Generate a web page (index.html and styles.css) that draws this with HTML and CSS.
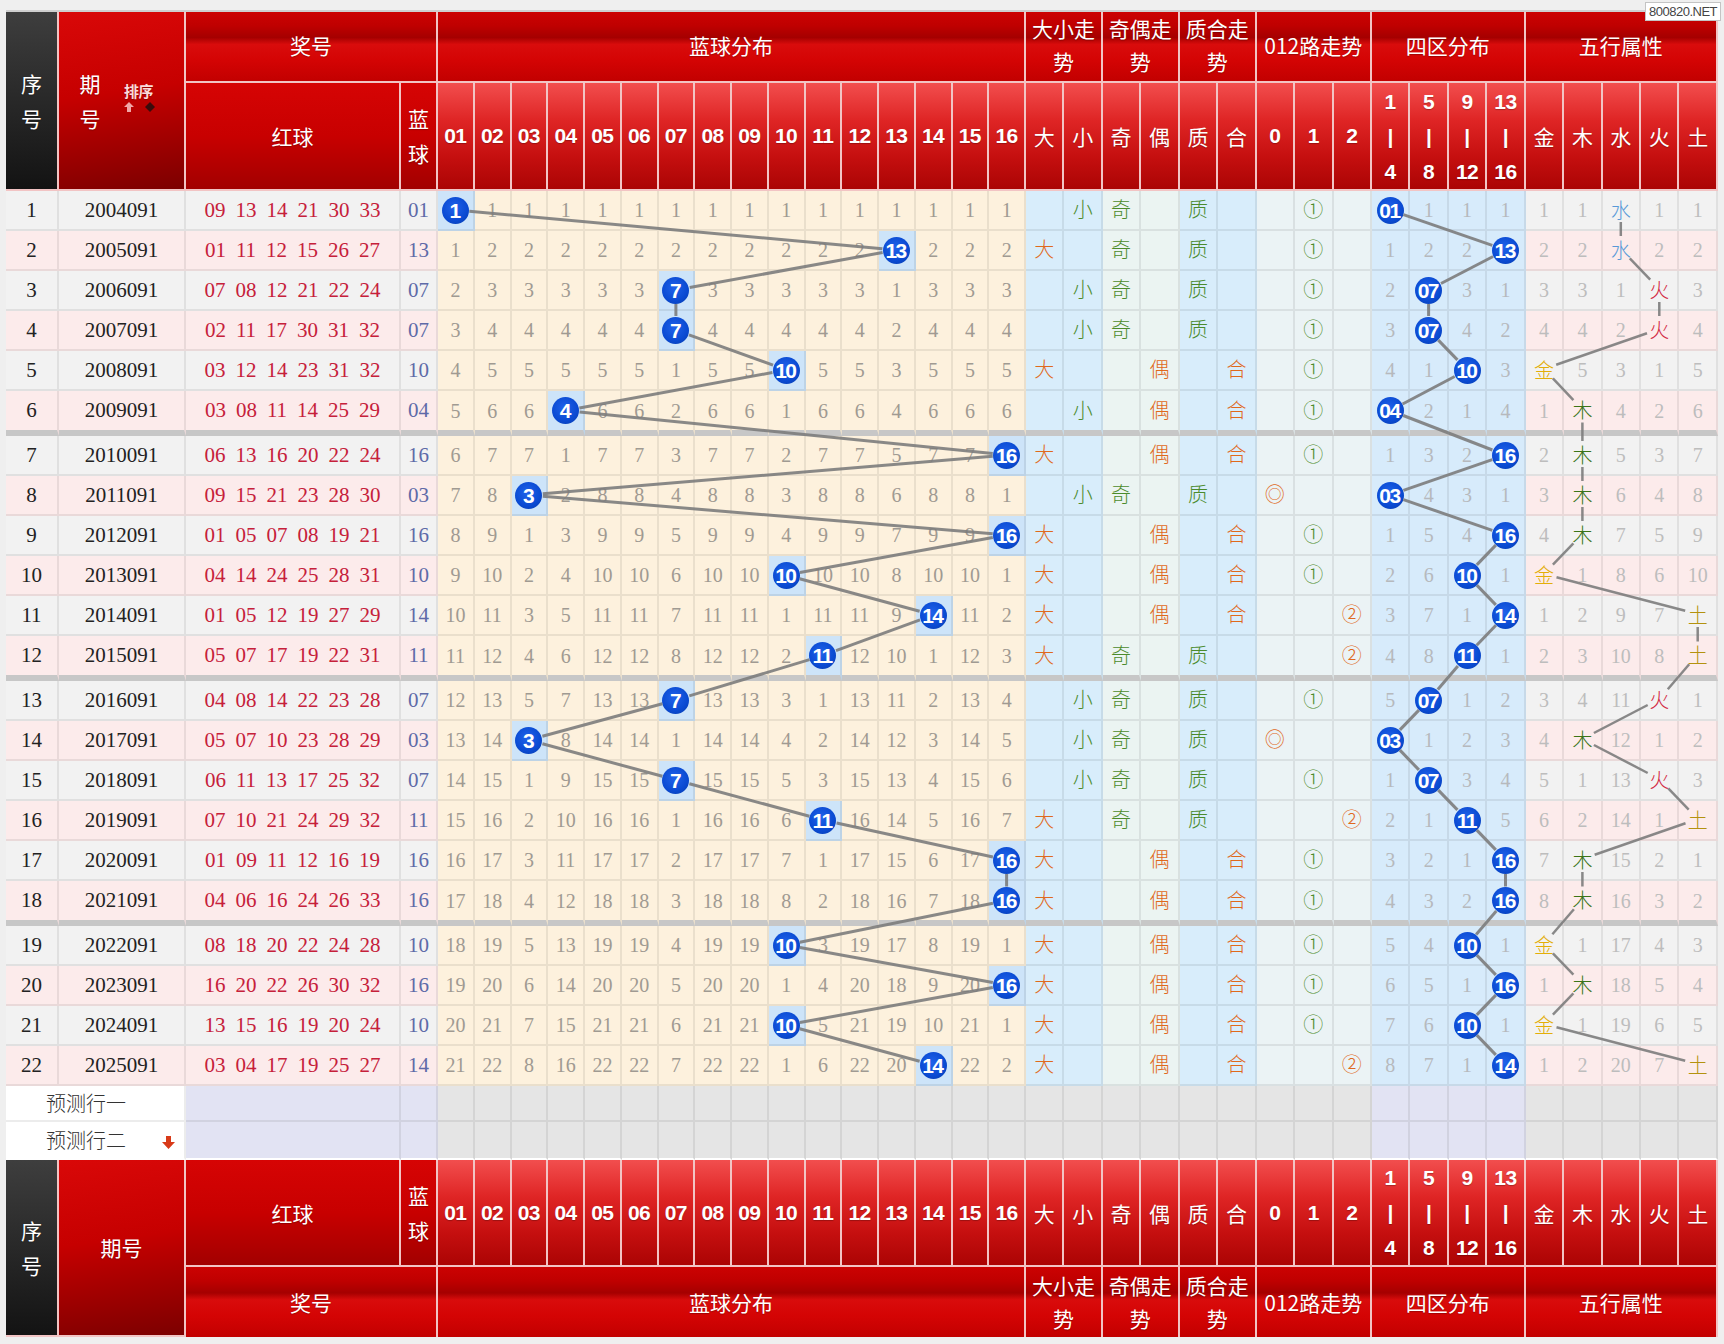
FILE: index.html
```html
<!DOCTYPE html>
<html lang="zh-CN">
<head>
<meta charset="utf-8">
<title>双色球蓝球走势图</title>
<link rel="stylesheet" href="styles.css">
</head>
<body>
<div class="chart">
<table class="trend">
<colgroup>
<col class="w-xh"><col class="w-qh"><col class="w-red"><col class="w-blue">
<col class="w-d"><col class="w-d"><col class="w-d"><col class="w-d"><col class="w-d"><col class="w-d"><col class="w-d"><col class="w-d">
<col class="w-d"><col class="w-d"><col class="w-d"><col class="w-d"><col class="w-d"><col class="w-d"><col class="w-d"><col class="w-d">
<col class="w-t"><col class="w-t"><col class="w-t"><col class="w-t"><col class="w-t"><col class="w-t"><col class="w-t"><col class="w-t"><col class="w-t">
<col class="w-t"><col class="w-t"><col class="w-t"><col class="w-t"><col class="w-t"><col class="w-t"><col class="w-t"><col class="w-t"><col class="w-t">
</colgroup>
<thead>
<tr class="g1">
<th rowspan="2" class="xh">序<br>号</th>
<th rowspan="2" class="qh"><div class="qh-in"><span class="qh-t">期<br>号</span><span class="sort"><b>排序</b><svg width="31" height="10" viewBox="0 0 31 10"><polygon points="5,0 10,5 7,5 7,10 3,10 3,5 0,5" fill="#f0a6a6"/><polygon points="26,0 31,5 26,10 21,5" fill="#3a0b0b"/></svg></span></div></th>
<th colspan="2" class="band">奖号</th>
<th colspan="16" class="band">蓝球分布</th>
<th colspan="2" class="band wrap">大小走势</th>
<th colspan="2" class="band wrap">奇偶走势</th>
<th colspan="2" class="band wrap">质合走势</th>
<th colspan="3" class="band">012路走势</th>
<th colspan="4" class="band">四区分布</th>
<th colspan="5" class="band">五行属性</th>
</tr>
<tr class="g2">
<th class="big">红球</th>
<th class="big tall">蓝<br>球</th>
<th class="num">01</th><th class="num">02</th><th class="num">03</th><th class="num">04</th><th class="num">05</th><th class="num">06</th><th class="num">07</th><th class="num">08</th>
<th class="num">09</th><th class="num">10</th><th class="num">11</th><th class="num">12</th><th class="num">13</th><th class="num">14</th><th class="num">15</th><th class="num">16</th>
<th class="cell">大</th><th class="cell">小</th><th class="cell">奇</th><th class="cell">偶</th><th class="cell">质</th><th class="cell">合</th>
<th class="num">0</th><th class="num">1</th><th class="num">2</th>
<th class="num st">1<br>|<br>4</th><th class="num st">5<br>|<br>8</th><th class="num st">9<br>|<br>12</th><th class="num st">13<br>|<br>16</th>
<th class="cell">金</th><th class="cell">木</th><th class="cell">水</th><th class="cell">火</th><th class="cell">土</th>
</tr>
</thead>
<tbody id="tb">
<tr class="p" id="pred1">
<td colspan="2" class="pl">预测行一</td>
<td class="lav"></td><td class="lav"></td>
<td class="gr"></td><td class="gr"></td><td class="gr"></td><td class="gr"></td><td class="gr"></td><td class="gr"></td><td class="gr"></td><td class="gr"></td>
<td class="gr"></td><td class="gr"></td><td class="gr"></td><td class="gr"></td><td class="gr"></td><td class="gr"></td><td class="gr"></td><td class="gr"></td>
<td class="gr"></td><td class="gr"></td><td class="gr"></td><td class="gr"></td><td class="gr"></td><td class="gr"></td><td class="gr"></td><td class="gr"></td><td class="gr"></td>
<td class="lav"></td><td class="lav"></td><td class="lav"></td><td class="lav"></td>
<td class="gr"></td><td class="gr"></td><td class="gr"></td><td class="gr"></td><td class="gr"></td>
</tr>
<tr class="p p2">
<td colspan="2" class="pl">预测行二<svg class="down" width="13" height="13" viewBox="0 0 13 13"><polygon points="4,0 9,0 9,6 13,6 6.5,13 0,6 4,6" fill="#d83a18"/></svg></td>
<td class="lav"></td><td class="lav"></td>
<td class="gr"></td><td class="gr"></td><td class="gr"></td><td class="gr"></td><td class="gr"></td><td class="gr"></td><td class="gr"></td><td class="gr"></td>
<td class="gr"></td><td class="gr"></td><td class="gr"></td><td class="gr"></td><td class="gr"></td><td class="gr"></td><td class="gr"></td><td class="gr"></td>
<td class="gr"></td><td class="gr"></td><td class="gr"></td><td class="gr"></td><td class="gr"></td><td class="gr"></td><td class="gr"></td><td class="gr"></td><td class="gr"></td>
<td class="lav"></td><td class="lav"></td><td class="lav"></td><td class="lav"></td>
<td class="gr"></td><td class="gr"></td><td class="gr"></td><td class="gr"></td><td class="gr"></td>
</tr>
</tbody>
<tfoot>
<tr class="f1">
<th rowspan="2" class="xh">序<br>号</th>
<th rowspan="2" class="qh">期号</th>
<th class="big">红球</th>
<th class="big tall">蓝<br>球</th>
<th class="num">01</th><th class="num">02</th><th class="num">03</th><th class="num">04</th><th class="num">05</th><th class="num">06</th><th class="num">07</th><th class="num">08</th>
<th class="num">09</th><th class="num">10</th><th class="num">11</th><th class="num">12</th><th class="num">13</th><th class="num">14</th><th class="num">15</th><th class="num">16</th>
<th class="cell">大</th><th class="cell">小</th><th class="cell">奇</th><th class="cell">偶</th><th class="cell">质</th><th class="cell">合</th>
<th class="num">0</th><th class="num">1</th><th class="num">2</th>
<th class="num st">1<br>|<br>4</th><th class="num st">5<br>|<br>8</th><th class="num st">9<br>|<br>12</th><th class="num st">13<br>|<br>16</th>
<th class="cell">金</th><th class="cell">木</th><th class="cell">水</th><th class="cell">火</th><th class="cell">土</th>
</tr>
<tr class="f2">
<th colspan="2" class="band">奖号</th>
<th colspan="16" class="band">蓝球分布</th>
<th colspan="2" class="band wrap">大小走势</th>
<th colspan="2" class="band wrap">奇偶走势</th>
<th colspan="2" class="band wrap">质合走势</th>
<th colspan="3" class="band">012路走势</th>
<th colspan="4" class="band">四区分布</th>
<th colspan="5" class="band">五行属性</th>
</tr>
</tfoot>
</table>
<svg class="lines" id="lines"></svg>
<div class="mark">800820.NET</div>
</div>
<script src="script.js"></script>
</body>
</html>
```

FILE: styles.css
```css
* { box-sizing: border-box; }
html, body { margin: 0; }
body {
  background: #efefef;
  padding: 10px 6px 0;
  font-family: "Liberation Serif", "Noto Sans CJK SC", serif;
}
.chart { position: relative; width: 1712px; }
.trend {
  width: 1712px;
  table-layout: fixed;
  border-collapse: separate;
  border-spacing: 0;
  border-top: 2px solid #cfcfcf;
}
.w-xh { width: 53px; }
.w-qh { width: 127px; }
.w-red { width: 215px; }
.w-blue { width: 37px; }
.w-d { width: 36.75px; }
.w-t { width: 38.44px; }

/* header */
th {
  padding: 0;
  color: #fff;
  font-family: "Noto Sans CJK SC", sans-serif;
  font-weight: 400;
  font-size: 21px;
  text-align: center;
  vertical-align: middle;
  border-right: 2px solid #f2c4c4;
  border-bottom: 2px solid #f2c4c4;
  text-shadow: 0 1px 1px rgba(0,0,0,.25);
}
.g1 { height: 71px; }
.g1 .band { padding-bottom: 3px; }
.f2 { height: 70px; }
.g2 { height: 108px; }
.f1 { height: 106px; }
.f2 th { border-bottom: none; }
.xh {
  background: linear-gradient(#3e3e3e, #131313);
  line-height: 35px;
}
.qh {
  background: linear-gradient(172deg, #d90808 0%, #c60000 45%, #7c0000 100%);
  line-height: 35px;
}
.qh-in { display: flex; align-items: center; padding-left: 20px; }
.qh-t { width: 22px; }
.sort {
  display: flex;
  flex-direction: column;
  align-items: flex-start;
  margin-left: 23px;
  margin-top: -6px;
  line-height: 16px;
}
.sort b {
  font-size: 15px;
  font-weight: 700;
  color: #fbdada;
  letter-spacing: -0.5px;
  margin-bottom: 3px;
}
.band {
  background: linear-gradient(to bottom, #cc0202 0%, #bf0000 20%, #a50000 37%, #d90c0c 47%, #d40404 70%, #c20000 100%);
}
.wrap { line-height: 33px; }
.big {
  background: linear-gradient(to bottom, #d60404 0%, #c80000 50%, #a20000 100%);
}
.tall { line-height: 35px; }
.num, .cell {
  background: linear-gradient(to bottom, #f24e4e 0%, #df2525 35%, #c50f0f 70%, #ab0404 100%);
}
.num {
  font-family: "Liberation Sans", sans-serif;
  font-weight: 700;
  font-size: 21px;
  letter-spacing: -0.5px;
}
.st { line-height: 35px; }

/* body */
td {
  padding: 0;
  text-align: center;
  vertical-align: middle;
  font-size: 21px;
  line-height: 1;
  border-right: 2px solid rgba(0,0,0,.075);
  border-bottom: 2px solid rgba(0,0,0,.075);
  white-space: nowrap;
}
.r { height: 40px; }
.r.sep { height: 45px; }
.r.sep td { border-bottom: 6px solid #c7c7c7; }
.r.odd .base, .r.odd .wx { background: #f2f2f2; }
.r.even .base, .r.even .wx { background: #fcebeb; }
.c-xh, .c-qh { color: #222; }
.c-red { color: #c6203a; }
.c-red span { margin: 0 5px; }
.c-blue { color: #5e6aa8; }
.d { background: #fdf1dd; color: #a09a92; font-size: 20px; }
.d.hit { background: #cde4f9; }
.dx, .zh { background: #d8edfb; }
.jo { background: #ebf4f2; }
.ll { background: #ebf3f5; }
.zn { background: #d7ebfb; color: #b6b9bd; font-size: 20px; }
.wx { color: #bdbdbd; font-size: 20px; }
.cj {
  font-family: "Noto Sans CJK SC", sans-serif;
  font-weight: 300;
  font-size: 20px;
}
.g { color: #4b8b2b; }
.o { color: #e0691c; }
.jin { color: #e3ae08; }
.mu { color: #3a7418; }
.shui { color: #5799d8; }
.huo { color: #d22a44; }
.tu { color: #b4920e; }
.ball {
  display: inline-block;
  width: 27px;
  height: 27px;
  border-radius: 50%;
  background: radial-gradient(circle at 45% 40%, #1f62ea 0%, #0a4ad2 60%, #073aa6 100%);
  color: #fff;
  font-family: "Liberation Sans", sans-serif;
  font-weight: 700;
  font-size: 21px;
  line-height: 27px;
  letter-spacing: -1.5px;
  text-indent: -1.5px;
  vertical-align: middle;
}

/* prediction rows */
.p { height: 36px; }
.p2 { height: 38px; }
.p2 td { border-bottom: 2px solid #fff; }
.pl {
  background: #fff;
  text-align: left;
  padding-left: 40px;
  color: #333;
  font-family: "Noto Sans CJK SC", sans-serif;
  font-weight: 300;
  font-size: 20px;
}
.down { margin-left: 36px; vertical-align: middle; }
.lav { background: #e2e3f3; }
.gr { background: #e5e5e5; }

/* overlays */
.lines {
  position: absolute;
  left: 0;
  top: 0;
  pointer-events: none;
}
.mark {
  position: absolute;
  top: -8px;
  right: -3px;
  height: 19px;
  padding: 0 3px;
  background: #fff;
  border: 1px solid #c4c4c4;
  color: #444;
  font-family: "Liberation Sans", sans-serif;
  font-size: 13px;
  letter-spacing: -0.5px;
  line-height: 17px;
}
```

FILE: script.js
```js
(function () {
  var data = [
    ["1", "2004091", "09 13 14 21 30 33", "01"],
    ["2", "2005091", "01 11 12 15 26 27", "13"],
    ["3", "2006091", "07 08 12 21 22 24", "07"],
    ["4", "2007091", "02 11 17 30 31 32", "07"],
    ["5", "2008091", "03 12 14 23 31 32", "10"],
    ["6", "2009091", "03 08 11 14 25 29", "04"],
    ["7", "2010091", "06 13 16 20 22 24", "16"],
    ["8", "2011091", "09 15 21 23 28 30", "03"],
    ["9", "2012091", "01 05 07 08 19 21", "16"],
    ["10", "2013091", "04 14 24 25 28 31", "10"],
    ["11", "2014091", "01 05 12 19 27 29", "14"],
    ["12", "2015091", "05 07 17 19 22 31", "11"],
    ["13", "2016091", "04 08 14 22 23 28", "07"],
    ["14", "2017091", "05 07 10 23 28 29", "03"],
    ["15", "2018091", "06 11 13 17 25 32", "07"],
    ["16", "2019091", "07 10 21 24 29 32", "11"],
    ["17", "2020091", "01 09 11 12 16 19", "16"],
    ["18", "2021091", "04 06 16 24 26 33", "16"],
    ["19", "2022091", "08 18 20 22 24 28", "10"],
    ["20", "2023091", "16 20 22 26 30 32", "16"],
    ["21", "2024091", "13 15 16 19 20 24", "10"],
    ["22", "2025091", "03 04 17 19 25 27", "14"]
  ];
  var WX = { 9: 0, 10: 0, 3: 1, 4: 1, 15: 1, 16: 1, 1: 2, 12: 2, 13: 2, 6: 3, 7: 3, 2: 4, 5: 4, 8: 4, 11: 4, 14: 4 };
  var WXN = ["金", "木", "水", "火", "土"];
  var WXC = ["jin", "mu", "shui", "huo", "tu"];
  var PRIME = [1, 2, 3, 5, 7, 11, 13];
  var miss = [], zmiss = [0, 0, 0, 0], wmiss = [0, 0, 0, 0, 0];
  for (var q = 0; q <= 16; q++) miss[q] = 0;

  var tb = document.getElementById("tb");
  var pred = document.getElementById("pred1");

  data.forEach(function (d, i) {
    var b = parseInt(d[3], 10);
    var tr = document.createElement("tr");
    tr.className = "r " + (i % 2 ? "even" : "odd") + ((i + 1) % 6 === 0 && i < 21 ? " sep" : "");
    var h = "";
    h += '<td class="base c-xh">' + d[0] + "</td>";
    h += '<td class="base c-qh">' + d[1] + "</td>";
    h += '<td class="base c-red">' + d[2].split(" ").map(function (n) { return "<span>" + n + "</span>"; }).join("") + "</td>";
    h += '<td class="base c-blue">' + d[3] + "</td>";
    for (var c = 1; c <= 16; c++) {
      if (c === b) {
        miss[c] = 0;
        h += '<td class="d hit"><span class="ball" data-chain="dist">' + b + "</span></td>";
      } else {
        miss[c]++;
        h += '<td class="d">' + miss[c] + "</td>";
      }
    }
    var big = b >= 9, odd = b % 2 === 1, pr = PRIME.indexOf(b) >= 0, m = b % 3;
    h += '<td class="dx">' + (big ? '<span class="cj o">大</span>' : "") + "</td>";
    h += '<td class="dx">' + (!big ? '<span class="cj g">小</span>' : "") + "</td>";
    h += '<td class="jo">' + (odd ? '<span class="cj g">奇</span>' : "") + "</td>";
    h += '<td class="jo">' + (!odd ? '<span class="cj o">偶</span>' : "") + "</td>";
    h += '<td class="zh">' + (pr ? '<span class="cj g">质</span>' : "") + "</td>";
    h += '<td class="zh">' + (!pr ? '<span class="cj o">合</span>' : "") + "</td>";
    h += '<td class="ll">' + (m === 0 ? '<span class="cj o">◎</span>' : "") + "</td>";
    h += '<td class="ll">' + (m === 1 ? '<span class="cj g">①</span>' : "") + "</td>";
    h += '<td class="ll">' + (m === 2 ? '<span class="cj o">②</span>' : "") + "</td>";
    var z = Math.ceil(b / 4) - 1;
    for (var k = 0; k < 4; k++) {
      if (k === z) {
        zmiss[k] = 0;
        h += '<td class="zn"><span class="ball" data-chain="zone">' + d[3] + "</span></td>";
      } else {
        zmiss[k]++;
        h += '<td class="zn">' + zmiss[k] + "</td>";
      }
    }
    var w = WX[b];
    for (var e = 0; e < 5; e++) {
      if (e === w) {
        wmiss[e] = 0;
        h += '<td class="wx"><span class="cj ' + WXC[e] + '" data-chain="wx">' + WXN[e] + "</span></td>";
      } else {
        wmiss[e]++;
        h += '<td class="wx">' + wmiss[e] + "</td>";
      }
    }
    tr.innerHTML = h;
    tb.insertBefore(tr, pred);
  });

  function draw() {
    var wrap = document.querySelector(".chart");
    var svg = document.getElementById("lines");
    var wr = wrap.getBoundingClientRect();
    svg.setAttribute("width", wr.width);
    svg.setAttribute("height", wr.height);
    var out = "";
    ["dist", "zone", "wx"].forEach(function (key) {
      var els = wrap.querySelectorAll('[data-chain="' + key + '"]');
      var trim = key === "wx" ? 13 : 14;
      var sw = key === "wx" ? 2.5 : 3;
      var pts = [];
      for (var i = 0; i < els.length; i++) {
        var r = els[i].getBoundingClientRect();
        pts.push([r.left + r.width / 2 - wr.left, r.top + r.height / 2 - wr.top]);
      }
      for (var j = 0; j < pts.length - 1; j++) {
        var a = pts[j], b = pts[j + 1];
        var dx = b[0] - a[0], dy = b[1] - a[1];
        var len = Math.sqrt(dx * dx + dy * dy);
        if (len <= trim * 2) continue;
        var ux = dx / len, uy = dy / len;
        out += '<line x1="' + (a[0] + ux * trim).toFixed(1) + '" y1="' + (a[1] + uy * trim).toFixed(1) +
          '" x2="' + (b[0] - ux * trim).toFixed(1) + '" y2="' + (b[1] - uy * trim).toFixed(1) +
          '" stroke="#7c7c7c" stroke-width="' + sw + '" stroke-opacity="0.9" stroke-linecap="butt"/>';
      }
    });
    svg.innerHTML = out;
  }
  draw();
  if (document.fonts && document.fonts.ready) document.fonts.ready.then(draw);
  window.addEventListener("load", draw);
})();
```
